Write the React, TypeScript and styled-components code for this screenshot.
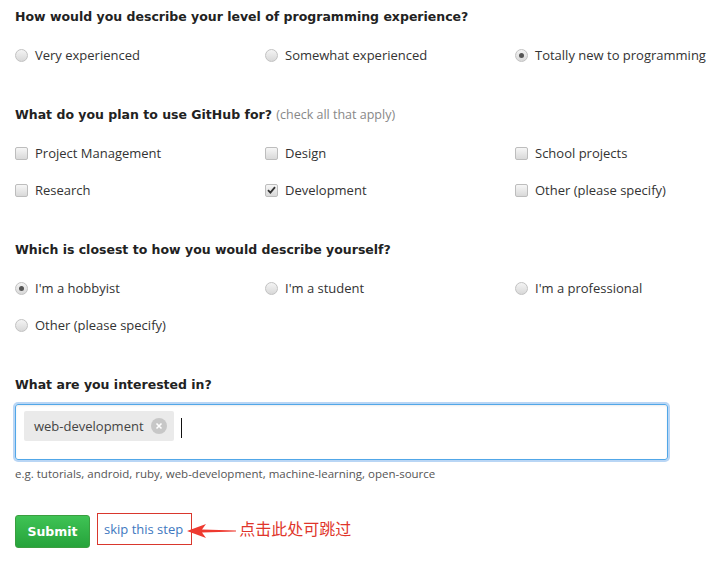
import React from "react";
import styled, { createGlobalStyle } from "styled-components";

const Global = createGlobalStyle`
  html, body { margin: 0; padding: 0; background: #fff; }
  body { font-family: "Open Sans", "Liberation Sans", sans-serif; color: #333; }
`;

const Page = styled.div`
  padding: 8px 15px 0 15px;
  width: 721px;
  box-sizing: border-box;
`;

const Section = styled.section`
  margin-bottom: 41px;
`;

const Heading = styled.h3`
  margin: 0 0 19px 0;
  font-family: "DejaVu Sans", Verdana, sans-serif;
  font-weight: bold;
  font-size: 12.5px;
  line-height: 18px;
  color: #222;
`;

const Note = styled.span`
  font-family: "Open Sans", sans-serif;
  font-weight: normal;
  font-size: 12.5px;
  color: #888;
`;

const Grid = styled.div`
  display: grid;
  grid-template-columns: 250px 250px 200px;
  row-gap: 17px;
`;

const Option = styled.label`
  display: flex;
  align-items: center;
  gap: 7px;
  font-size: 13px;
  line-height: 20px;
  color: #333;
  white-space: nowrap;
`;

const Radio = styled.span<{ $checked?: boolean }>`
  position: relative;
  width: 11px;
  height: 11px;
  border-radius: 50%;
  border: 1px solid #c2c2c2;
  background: linear-gradient(#f4f4f4, #d8d8d8);
  flex: none;
  &::after {
    content: "";
    display: ${(p) => (p.$checked ? "block" : "none")};
    position: absolute;
    left: 3px;
    top: 3px;
    width: 5px;
    height: 5px;
    border-radius: 50%;
    background: #555;
  }
`;

const Box = styled.span`
  width: 11px;
  height: 11px;
  border-radius: 2px;
  border: 1px solid #bdbdbd;
  background: linear-gradient(#f6f6f6, #d9d9d9);
  flex: none;
  display: flex;
  align-items: center;
  justify-content: center;
`;

const InputBox = styled.div`
  width: 653px;
  height: 56px;
  box-sizing: border-box;
  border: 1px solid #51a7e8;
  border-radius: 3px;
  box-shadow: 0 0 0 2px #b9d6f5, inset 0 1px 2px rgba(0, 0, 0, 0.075);
  padding: 6px 8px;
  display: flex;
  align-items: flex-start;
  gap: 7px;
  margin-top: -9px;
`;

const Tag = styled.span`
  display: flex;
  align-items: center;
  gap: 7px;
  height: 30px;
  padding: 0 7px 0 10px;
  background: #eaeaea;
  border-radius: 2px;
  font-size: 13px;
  color: #444;
`;

const TagClose = styled.span`
  width: 16px;
  height: 16px;
  border-radius: 50%;
  background: #c7c7c7;
  display: flex;
  align-items: center;
  justify-content: center;
`;

const Caret = styled.span`
  width: 1px;
  height: 20px;
  background: #111;
  margin-top: 7px;
`;

const Hint = styled.p`
  margin: 6px 0 0 0;
  font-size: 11.5px;
  line-height: 16px;
  color: #555;
`;

const Actions = styled.div`
  display: flex;
  align-items: flex-start;
  margin-top: 31px;
`;

const Submit = styled.button`
  width: 75px;
  height: 33px;
  margin-top: 2px;
  border: 1px solid #3a9e3f;
  border-radius: 3px;
  background: linear-gradient(#3fc355, #26a33b);
  color: #fff;
  font-family: "DejaVu Sans", Verdana, sans-serif;
  font-weight: bold;
  font-size: 12.5px;
  padding: 0;
`;

const SkipBox = styled.a`
  margin-left: 7px;
  height: 32px;
  box-sizing: border-box;
  border: 1px solid #d9372d;
  padding: 0 8px 0 6px;
  display: flex;
  align-items: center;
  font-size: 13px;
  color: #4078c0;
  text-decoration: none;
  background: #fff;
`;

const Arrow = styled.svg`
  margin-left: -5px;
  margin-top: 10px;
  flex: none;
`;

const Annotation = styled.span`
  margin-left: 2px;
  margin-top: 4px;
  font-family: "Noto Sans CJK SC", sans-serif;
  font-size: 16px;
  line-height: 22px;
  color: #e0352b;
`;

const RadioOpt = ({ label, checked }: { label: string; checked?: boolean }) => (
  <Option>
    <Radio $checked={checked} />
    {label}
  </Option>
);

const CheckOpt = ({ label, checked }: { label: string; checked?: boolean }) => (
  <Option>
    <Box>
      {checked && (
        <svg width="9" height="8" viewBox="0 0 9 8">
          <path d="M1 4.2 L3.4 6.6 L8 1.2" stroke="#333" strokeWidth="1.8" fill="none" />
        </svg>
      )}
    </Box>
    {label}
  </Option>
);

export default function App() {
  return (
    <Page>
      <Global />
      <Section>
        <Heading>How would you describe your level of programming experience?</Heading>
        <Grid>
          <RadioOpt label="Very experienced" />
          <RadioOpt label="Somewhat experienced" />
          <RadioOpt label="Totally new to programming" checked />
        </Grid>
      </Section>
      <Section>
        <Heading>
          What do you plan to use GitHub for? <Note>(check all that apply)</Note>
        </Heading>
        <Grid>
          <CheckOpt label="Project Management" />
          <CheckOpt label="Design" />
          <CheckOpt label="School projects" />
          <CheckOpt label="Research" />
          <CheckOpt label="Development" checked />
          <CheckOpt label="Other (please specify)" />
        </Grid>
      </Section>
      <Section>
        <Heading>Which is closest to how you would describe yourself?</Heading>
        <Grid>
          <RadioOpt label="I'm a hobbyist" checked />
          <RadioOpt label="I'm a student" />
          <RadioOpt label="I'm a professional" />
          <RadioOpt label="Other (please specify)" />
        </Grid>
      </Section>
      <Section>
        <Heading>What are you interested in?</Heading>
        <InputBox>
          <Tag>
            web-development
            <TagClose>
              <svg width="8" height="8" viewBox="0 0 8 8">
                <path d="M1.5 1.5 L6.5 6.5 M6.5 1.5 L1.5 6.5" stroke="#fff" strokeWidth="1.6" />
              </svg>
            </TagClose>
          </Tag>
          <Caret />
        </InputBox>
        <Hint>e.g. tutorials, android, ruby, web-development, machine-learning, open-source</Hint>
        <Actions>
          <Submit>Submit</Submit>
          <SkipBox href="#">skip this step</SkipBox>
          <Arrow width="50" height="16" viewBox="0 0 50 16">
            <path d="M0 8 L19 1 L15 6.6 L49 7.4 L49 8.6 L15 9.4 L19 15 Z" fill="#ee3a30" />
          </Arrow>
          <Annotation>点击此处可跳过</Annotation>
        </Actions>
      </Section>
    </Page>
  );
}
